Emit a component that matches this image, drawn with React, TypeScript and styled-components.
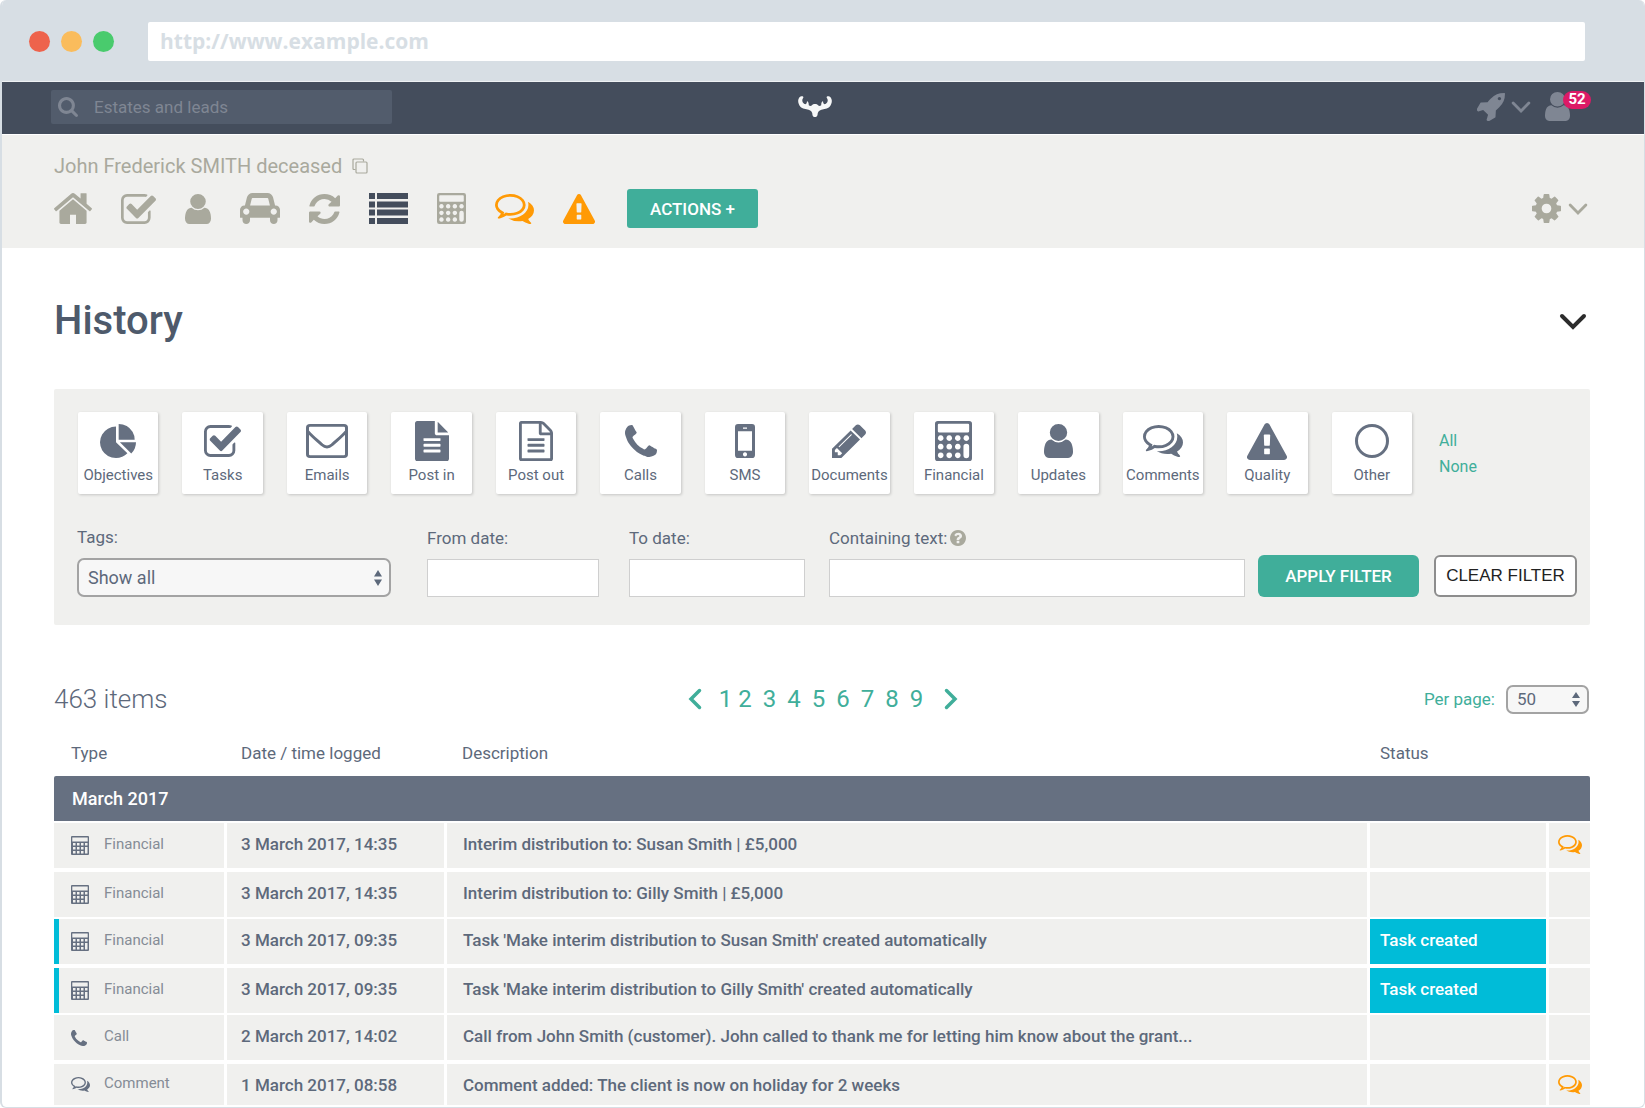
import React from "react";
import styled, { createGlobalStyle } from "styled-components";

const c = {
  frame: "#d7dee4",
  nav: "#444d5c",
  navField: "#525c6c",
  navMuted: "#7f8693",
  band: "#f0f0ee",
  stone: "#a9a99d",
  ink: "#5d697b",
  heading: "#4e5a6b",
  slate: "#667081",
  green: "#40ae9a",
  orange: "#ff9a05",
  cyan: "#00bcd8",
};

const GlobalStyle = createGlobalStyle`
  *, *::before, *::after { box-sizing: border-box; }
  body {
    margin: 0;
    background: #fff;
    color: ${c.ink};
    font-family: Roboto, "Liberation Sans", sans-serif;
    font-size: 17px;
    line-height: 24px;
  }
  button, input, select { font: inherit; color: inherit; margin: 0; }
  button { cursor: pointer; }
  svg { display: block; flex: none; }
`;

/* ---------- icons ---------- */

type Shape = { box?: string; body: React.ReactNode };

const Calculator = (
  <path
    fillRule="evenodd"
    d="M128 0H1536Q1664 0 1664 128V1664Q1664 1792 1536 1792H128Q0 1792 0 1664V128Q0 0 128 0ZM176 128Q128 128 128 176V464Q128 512 176 512H1488Q1536 512 1536 464V176Q1536 128 1488 128ZM256 640a128 128 0 1 0 1 0ZM640 640a128 128 0 1 0 1 0ZM1024 640a128 128 0 1 0 1 0ZM1408 640a128 128 0 1 0 1 0ZM256 1024a128 128 0 1 0 1 0ZM640 1024a128 128 0 1 0 1 0ZM1024 1024a128 128 0 1 0 1 0ZM256 1408a128 128 0 1 0 1 0ZM640 1408a128 128 0 1 0 1 0ZM1024 1408a128 128 0 1 0 1 0ZM1408 1024a128 128 0 0 1 128 128V1536a128 128 0 0 1-256 0V1152a128 128 0 0 1 128-128Z"
  />
);

const shapes: Record<string, Shape> = {
  home: {
    box: "90 250 1612 1286",
    body: <path d="M1472 992v480q0 26-19 45t-45 19h-384v-384h-256v384h-384q-26 0-45-19t-19-45v-480q0-1 .5-3t.5-3l575-474 575 474q1 2 1 6zm223-69l-62 74q-8 9-21 11h-3q-13 0-21-7l-692-577-692 577q-12 8-24 7-13-2-21-11l-62-74q-8-10-7-23.5t11-21.5l719-599q32-26 76-26t76 26l244 204v-195q0-14 9-23t23-9h192q14 0 23 9t9 23v408l219 182q10 8 11 21.5t-7 23.5z" />,
  },
  check: {
    box: "64 128 1664 1408",
    body: <path d="M1472 930v318q0 119-84.5 203.5t-203.5 84.5h-832q-119 0-203.5-84.5t-84.5-203.5v-832q0-119 84.5-203.5t203.5-84.5h832q63 0 117 25 15 7 18 23 3 17-9 29l-49 49q-10 10-23 10-3 0-9-2-23-6-45-6h-832q-66 0-113 47t-47 113v832q0 66 47 113t113 47h832q66 0 113-47t47-113v-254q0-13 9-22l64-64q10-10 23-10 6 0 12 3 20 8 20 29zm231-489l-814 814q-24 24-57 24t-57-24l-430-430q-24-24-24-57t24-57l110-110q24-24 57-24t57 24l263 263 647-647q24-24 57-24t57 24l110 110q24 24 24 57t-24 57z" />,
  },
  user: {
    box: "256 128 1280 1536",
    body: <path d="M1536 1399q0 109-62.5 187t-150.5 78h-854q-88 0-150.5-78t-62.5-187q0-85 8.5-160.5t31.5-152 58.5-131 94-89 134.5-34.5q131 128 313 128t313-128q76 0 134.5 34.5t94 89 58.5 131 31.5 152 8.5 160.5zm-256-887q0 159-112.5 271.5t-271.5 112.5-271.5-112.5-112.5-271.5 112.5-271.5 271.5-112.5 271.5 112.5 112.5 271.5z" />,
  },
  car: {
    box: "0 128 2048 1600",
    body: <path d="M480 1088q0-66-47-113t-113-47-113 47-47 113 47 113 113 47 113-47 47-113zm36-320h1016l-89-357q-2-8-14-17.5t-21-9.5h-768q-9 0-21 9.5t-14 17.5zm1372 320q0-66-47-113t-113-47-113 47-47 113 47 113 113 47 113-47 47-113zm160-96v384q0 14-9 23t-23 9h-96v128q0 80-56 136t-136 56-136-56-56-136v-128h-1024v128q0 80-56 136t-136 56-136-56-56-136v-128h-96q-14 0-23-9t-9-23v-384q0-93 65.5-158.5t158.5-65.5h28l105-419q23-94 104-157.5t179-63.5h768q98 0 179 63.5t104 157.5l105 419h28q93 0 158.5 65.5t65.5 158.5z" />,
  },
  refresh: {
    box: "128 128 1536 1536",
    body: <path d="M1639 1056q0 5-1 7-64 268-268 434.5t-478 166.5q-146 0-282.5-55t-243.5-157l-129 129q-19 19-45 19t-45-19-19-45v-448q0-26 19-45t45-19h448q26 0 45 19t19 45-19 45l-137 137q71 66 161 102t187 36q134 0 250-65t186-179q11-17 53-117 8-23 30-23h192q13 0 22.5 9.5t9.5 22.5zm25-800v448q0 26-19 45t-45 19h-448q-26 0-45-19t-19-45 19-45l138-138q-148-137-349-137-134 0-250 65t-186 179q-11 17-53 117-8 23-30 23h-199q-13 0-22.5-9.5t-9.5-22.5v-7q65-268 270-434.5t480-166.5q146 0 284 55.5t245 156.5l130-129q19-19 45-19t45 19 19 45z" />,
  },
  list: {
    box: "0 0 39 31",
    body: <path d="M0 0h6v6H0zM8 0h31v6H8zM0 8.500h6v6H0zM8 8.500h31v6H8zM0 16.500h6v6H0zM8 16.500h31v6H8zM0 25h6v6H0zM8 25h31v6H8z" />,
  },
  calculator: { box: "0 0 1664 1792", body: Calculator },
  calculatorSmall: {
    box: "0 0 18 19",
    body: (
      <path
        fillRule="evenodd"
        d="M1 0H17Q18 0 18 1V18Q18 19 17 19H1Q0 19 0 18V1Q0 0 1 0ZM1.300 1.500V5.500H16.700V1.500ZM2 7V9.500H4.500V7ZM6 7V9.500H8.500V7ZM10 7V9.500H12.500V7ZM14 7V9.500H16.500V7ZM2 11V13.500H4.500V11ZM6 11V13.500H8.500V11ZM10 11V13.500H12.500V11ZM14 11V17.500H16.500V11ZM2 15V17.500H4.500V15ZM6 15V17.500H8.500V15ZM10 15V17.500H12.500V15Z"
      />
    ),
  },
  comments: {
    box: "0 256 1792 1408",
    body: <path d="M704 384q-153 0-286 52t-211.5 141-78.500 191q0 82 53 158t149 132l97 56-35 84q34-20 62-39l44-31 53 10q78 14 153 14 153 0 286-52t211.500-141 78.500-191-78.500-191-211.500-141-286-52zm0-128q191 0 353.500 68.500t256.500 186.500 94 257-94 257-256.500 186.500-353.500 68.500q-86 0-176-16-124 88-278 128-36 9-86 16h-3q-11 0-20.500-8t-11.500-21q-1-3-1-6.500t.5-6.500 2-6l2.500-5 3.500-5.500 4-5 4.500-5 4-4.500q5-6 23-25t26-29.500 22.500-29 25-38.500 20.500-44q-124-72-195-177t-71-224q0-139 94-257t256.500-186.500 353.500-68.500zm822 1169q10 24 20.500 44t25 38.500 22.500 29 26 29.500 23 25q1 1 4 4.500t4.500 5 4 5 3.500 5.500l2.500 5 2 6 .5 6.500-1 6.500q-3 14-13 22t-22 7q-50-7-86-16-154-40-278-128-90 16-176 16-271 0-472-132 58 4 88 4 161 0 309-45t264-129q125-92 192-212t67-254q0-77-23-152 129 71 204 178t75 230q0 120-71 224.500t-195 176.500z" />,
  },
  warning: {
    box: "0 0 1792 1664",
    body: <path d="M1024 1375v-190q0-14-9.500-23.500t-22.500-9.500h-192q-13 0-22.500 9.500t-9.500 23.500v190q0 14 9.500 23.500t22.500 9.500h192q13 0 22.500-9.500t9.500-23.500zm-2-374l18-459q0-12-10-19-13-11-24-11h-220q-11 0-24 11-10 7-10 21l17 457q0 10 10 16.500t24 6.500h185q14 0 23.500-6.500t10.500-16.500zm-14-934l768 1408q35 63-2 126-17 29-46.500 46t-63.500 17h-1536q-34 0-63.500-17t-46.500-46q-37-63-2-126l768-1408q17-31 47-49t65-18 65 18 47 49z" />,
  },
  cog: {
    box: "128 128 1536 1536",
    body: <path d="M1152 896q0-106-75-181t-181-75-181 75-75 181 75 181 181 75 181-75 75-181zm512-109v222q0 12-8 23t-20 13l-185 28q-19 54-39 91 35 50 107 138 10 12 10 25t-9 23q-27 37-99 108t-94 71q-12 0-26-9l-138-108q-44 23-91 38-16 136-29 186-7 28-36 28h-222q-14 0-24.500-8.500t-11.500-21.500l-28-184q-49-16-90-37l-141 107q-10 9-25 9-14 0-25-11-126-114-165-168-7-10-7-23 0-12 8-23 15-21 51-66.500t54-70.500q-27-50-41-99l-183-27q-13-2-21-12.500t-8-23.500v-222q0-12 8-23t19-13l186-28q14-46 39-92-40-57-107-138-10-12-10-24 0-10 9-23 26-36 98.500-107.500t94.500-71.500q13 0 26 10l138 107q44-23 91-38 16-136 29-186 7-28 36-28h222q14 0 24.500 8.500t11.500 21.500l28 184q49 16 90 37l142-107q9-9 24-9 13 0 25 10 129 119 165 170 7 8 7 22 0 12-8 23-15 21-51 66.500t-54 70.500q26 50 41 98l183 28q13 2 21 12.500t8 23.500z" />,
  },
  rocket: {
    box: "60 128 1604 1604",
    body: <path d="M1440 448q0-40-28-68t-68-28-68 28-28 68 28 68 68 28 68-28 28-68zm224-288q0 249-75.500 430.500t-253.500 360.500q-81 80-195 176l-20 379q-2 16-16 26l-384 224q-7 4-16 4-12 0-23-9l-64-64q-13-14-8-32l85-276-281-281-276 85q-3 1-9 1-14 0-23-9l-64-64q-17-19-5-39l224-384q10-14 26-16l379-20q96-114 176-195 188-187 358-258t431-71q14 0 24 9.500t10 22.500z" />,
  },
  search: {
    box: "64 128 1664 1664",
    body: <path d="M1216 832q0-185-131.500-316.500t-316.500-131.500-316.500 131.500-131.500 316.500 131.500 316.500 316.500 131.500 316.500-131.500 131.500-316.500zm512 832q0 52-38 90t-90 38q-54 0-90-38l-343-342q-179 124-399 124-143 0-273.500-55.500t-225-150-150-225-55.500-273.500 55.500-273.500 150-225 225-150 273.500-55.500 273.500 55.500 225 150 150 225 55.500 273.500q0 220-124 399l343 343q37 37 37 90z" />,
  },
  phone: {
    box: "192 128 1408 1408",
    body: <path d="M1600 1240q0 27-10 70.500t-21 68.500q-21 50-122 106-94 51-186 51-27 0-53-3.500t-57.500-12.500-47-14.500-55.500-20.500-49-18q-98-35-175-83-127-79-264-216t-216-264q-48-77-83-175-3-9-18-49t-20.500-55.500-14.500-47-12.500-57.500-3.500-53q0-92 51-186 56-101 106-122 25-11 68.500-21t70.500-10q14 0 21 3 18 6 53 76 11 19 30 54t35 63.500 31 53.500q3 4 17.500 25t21.500 35.500 7 28.500q0 20-28.500 50t-62 55-62 53-28.500 46q0 9 5 22.500t8.500 20.500 14 24 11.500 19q76 137 174 235t235 174q2 1 19 11.500t24 14 20.500 8.500 22.500 5q18 0 46-28.500t53-62 55-62 50-28.500q14 0 28.500 7t35.500 21.500 25 17.500q25 15 53.500 31t63.500 35 54 30q70 35 76 53 3 7 3 21z" />,
  },
  pie: {
    box: "0 0 1728 1664",
    body: <path d="M768 890l546 546q-106 108-247.500 168t-298.500 60q-209 0-385.500-103t-279.500-279.500-103-385.500 103-385.500 279.500-279.500 385.500-103v762zm187 6h773q0 157-60 298.500t-168 247.500zm709-128h-768v-768q209 0 385.500 103t279.500 279.500 103 385.500z" />,
  },
  envelope: {
    box: "0 0 42 36",
    body: (
      <g fill="none" stroke="currentColor" strokeWidth="3" strokeLinejoin="round">
        <rect x="1.500" y="1.500" width="39" height="33" rx="2.500" />
        <path d="M2 8C7 14 12 18 16 22Q21 26.500 26 22C30 18 35 14 40 8" />
      </g>
    ),
  },
  file: {
    box: "128 0 1536 1792",
    body: <path d="M1596 476q14 14 28 36h-472v-472q22 14 36 28zm-476 164h544v1056q0 40-28 68t-68 28h-1344q-40 0-68-28t-28-68v-1600q0-40 28-68t68-28h800v544q0 40 28 68t68 28zm160 736v-64q0-14-9-23t-23-9h-704q-14 0-23 9t-9 23v64q0 14 9 23t23 9h704q14 0 23-9t9-23zm0-256v-64q0-14-9-23t-23-9h-704q-14 0-23 9t-9 23v64q0 14 9 23t23 9h704q14 0 23-9t9-23zm0-256v-64q0-14-9-23t-23-9h-704q-14 0-23 9t-9 23v64q0 14 9 23t23 9h704q14 0 23-9t9-23z" />,
  },
  fileOutline: {
    box: "128 0 1536 1792",
    body: <path d="M1596 380q28 28 48 76t20 88v1152q0 40-28 68t-68 28h-1344q-40 0-68-28t-28-68v-1600q0-40 28-68t68-28h896q40 0 88 20t76 48zm-444-244v376h376q-10-29-22-41l-313-313q-12-12-41-22zm384 1528v-1024h-416q-40 0-68-28t-28-68v-416h-768v1536h1280zm-1024-864q0-14 9-23t23-9h704q14 0 23 9t9 23v64q0 14-9 23t-23 9h-704q-14 0-23-9t-9-23v-64zm736 224q14 0 23 9t9 23v64q0 14-9 23t-23 9h-704q-14 0-23-9t-9-23v-64q0-14 9-23t23-9h704zm0 256q14 0 23 9t9 23v64q0 14-9 23t-23 9h-704q-14 0-23-9t-9-23v-64q0-14 9-23t23-9h704z" />,
  },
  pencil: {
    box: "128 128 1515 1536",
    body: <path d="M491 1536l91-91-235-235-91 91v107h128v128h107zm523-928q0-22-22-22-10 0-17 7l-542 542q-7 7-7 17 0 22 22 22 10 0 17-7l542-542q7-7 7-17zm-54-192l416 416-832 832h-416v-416zm683 96q0 53-37 90l-166 166-416-416 166-165q36-38 90-38 53 0 91 38l235 234q37 39 37 91z" />,
  },
  mobile: {
    box: "0 0 20 33",
    body: (
      <path
        fillRule="evenodd"
        d="M3 0H17Q20 0 20 3V30Q20 33 17 33H3Q0 33 0 30V3Q0 0 3 0ZM3 7V26H17V7ZM8 3.500V4.500H12V3.500ZM10 27.500a2 2 0 1 0 .01 0Z"
      />
    ),
  },
  circle: {
    box: "0 0 34 34",
    body: <circle cx="17" cy="17" r="15.500" fill="none" stroke="currentColor" strokeWidth="3" />,
  },
  clone: {
    box: "0 0 16 16",
    body: (
      <g fill="none" stroke="currentColor" strokeWidth="1.200">
        <rect x="4" y="4" width="11" height="11" rx="1" />
        <path d="M3.500 11.500H2Q1 11.500 1 10.500V2Q1 1 2 1H10.500Q11.500 1 11.500 2V3.500" />
      </g>
    ),
  },
  help: {
    box: "0 0 1536 1536",
    body: <path d="M896 1248v-192q0-14-9-23t-23-9h-192q-14 0-23 9t-9 23v192q0 14 9 23t23 9h192q14 0 23-9t9-23zm256-672q0-88-55.500-163t-138.500-116-170-41q-243 0-371 213-15 24 8 42l132 100q7 6 19 6 16 0 25-12 53-68 86-92 34-24 86-24 48 0 85.500 26t37.500 59q0 38-20 61t-68 45q-63 28-115.500 86.500t-52.500 125.500v36q0 14 9 23t23 9h192q14 0 23-9t9-23q0-19 21.500-49.500t54.500-49.500q32-18 49-28.500t46-35 44.500-48 28-60.500 12.500-81zm384 192q0 209-103 385.500t-279.500 279.500-385.500 103-385.500-103-279.500-279.500-103-385.500 103-385.500 279.500-279.500 385.500-103 385.500 103 279.500 279.500 103 385.500z" />,
  },
  down: {
    box: "0 0 28 17",
    body: <path d="M3 3L14 14L25 3" fill="none" stroke="currentColor" strokeWidth="4" strokeLinecap="round" />,
  },
  left: {
    box: "0 0 14 22",
    body: <path d="M11.500 2.500L3 11L11.500 19.500" fill="none" stroke="currentColor" strokeWidth="3.500" strokeLinecap="round" />,
  },
  right: {
    box: "0 0 14 22",
    body: <path d="M2.500 2.500L11 11L2.500 19.500" fill="none" stroke="currentColor" strokeWidth="3.500" strokeLinecap="round" />,
  },
  updown: {
    box: "0 0 8 16",
    body: <path d="M4 0L8 6.500H0ZM4 16L8 9.500H0Z" />,
  },
  antlers: {
    box: "0 0 34 21",
    body: (
      <path d="M2.500 .5C5 -.5 6 1 5 2.300C3.500 4.500 4.500 7 6.500 8C8 8.500 8.800 7.500 9 5.200C10 5.200 10.800 6.800 10.800 9.200C12 10.200 13 10 14 9.300C14.800 7.600 19.200 7.600 20 9.300C21 10 22 10.200 23.200 9.200C23.200 6.800 24 5.200 25 5.200C25.200 7.500 26 8.500 27.500 8C29.500 7 30.500 4.500 29 2.300C28 1 29 -.5 31.500 .5C34 2 34.500 5.500 33 8.500C31.500 12 28.500 13 25.500 13.200C22.500 13.600 20.500 14.600 19.800 17C19.500 19 19.500 21 17 21C14.500 21 14.500 19 14.200 17C13.500 14.600 11.500 13.600 8.500 13.200C5.500 13 2.500 12 1 8.500C-.5 5.500 0 2 2.500 .5Z" />
    ),
  },
};

function Icon({ name, w, h }: { name: string; w: number; h: number }) {
  const s = shapes[name];
  return (
    <svg width={w} height={h} viewBox={s.box} preserveAspectRatio="none" fill="currentColor" aria-hidden="true">
      {s.body}
    </svg>
  );
}

/* ---------- browser frame ---------- */

const Frame = styled.div`
  min-height: 100vh;
  display: flex;
  flex-direction: column;
  border: solid ${c.frame};
  border-width: 0 1px 1px 2px;
  border-radius: 6px;
  overflow: hidden;
`;

const Chrome = styled.div`
  display: flex;
  align-items: center;
  height: 82px;
  padding: 2px 59px 0 27px;
  background: ${c.frame};
  border-bottom: 1px solid #eef1f3;
`;

const Dots = styled.div`
  display: flex;
  gap: 11px;
  width: 119px;
`;

const Dot = styled.span<{ $color: string }>`
  width: 21px;
  height: 21px;
  border-radius: 50%;
  background: ${(p) => p.$color};
`;

const Address = styled.input`
  flex: 1;
  min-width: 0;
  height: 39px;
  padding: 0 12px 2px;
  border: 0;
  border-radius: 2px;
  background: #fff;
  color: ${c.frame};
  font-family: "Open Sans", "Noto Sans", sans-serif;
  font-size: 21px;
  font-weight: 700;
`;

/* ---------- top navigation ---------- */

const Nav = styled.header`
  display: grid;
  grid-template-columns: 1fr auto 1fr;
  align-items: center;
  height: 52px;
  padding: 0 66px 3px 49px;
  background: ${c.nav};
  color: ${c.navMuted};
`;

const SearchBox = styled.label`
  display: flex;
  align-items: center;
  gap: 16px;
  width: 341px;
  height: 34px;
  padding: 0 7px;
  border-radius: 2px;
  background: ${c.navField};
`;

const SearchInput = styled.input`
  flex: 1;
  min-width: 0;
  padding: 0;
  border: 0;
  background: none;
  &::placeholder { color: ${c.navMuted}; opacity: 1; }
`;

const Logo = styled.a`
  color: #f6f7f7;
`;

const NavTools = styled.div`
  display: flex;
  justify-content: flex-end;
  align-items: center;
  gap: 14px;
  padding-right: 8px;
`;

const IconButton = styled.button<{ $gap?: number; $color?: string }>`
  display: flex;
  align-items: center;
  gap: ${(p) => p.$gap ?? 0}px;
  padding: 0;
  border: 0;
  background: none;
  color: ${(p) => p.$color ?? "inherit"};
`;

const UserButton = styled(IconButton)`
  position: relative;
`;

const Badge = styled.span`
  position: absolute;
  top: -1px;
  left: 18px;
  width: 28px;
  height: 18px;
  border-radius: 9px;
  background: #dc1a66;
  color: #fff;
  font-size: 15px;
  font-weight: 700;
  line-height: 17px;
  text-align: center;
`;

/* ---------- estate header ---------- */

const Band = styled.section`
  display: flex;
  flex-direction: column;
  gap: 11px;
  padding: 19px 54px 20px 52px;
  background: ${c.band};
  border-top: 1px solid #fff;
  color: ${c.stone};
`;

const EstateName = styled.div`
  display: flex;
  align-items: center;
  gap: 10px;
  font-size: 20px;
`;

const Toolbar = styled.div`
  display: flex;
  align-items: center;
  justify-content: space-between;
  padding-right: 2px;
`;

const Tools = styled.nav`
  display: flex;
  align-items: center;
  gap: 29px;
`;

const Tool = styled.a<{ $color?: string }>`
  color: ${(p) => p.$color ?? c.stone};
`;

const Primary = styled.button<{ $height: number; $radius: number }>`
  height: ${(p) => p.$height}px;
  padding: 0 23px;
  border: 0;
  border-radius: ${(p) => p.$radius}px;
  background: ${c.green};
  color: #fff;
  font-weight: 500;
  white-space: nowrap;
`;

const ToolbarAction = styled.div`
  padding-left: 3px;
`;

/* ---------- page body ---------- */

const Main = styled.main`
  flex: 1;
  padding: 49px 54px 0 52px;
`;

const TitleRow = styled.div`
  display: flex;
  align-items: center;
  justify-content: space-between;
  padding-right: 3px;
  color: #2c2c2c;
`;

const Title = styled.h1`
  margin: 0;
  color: ${c.heading};
  font-size: 40px;
  font-weight: 500;
  line-height: 48px;
`;

const Filters = styled.form`
  margin-top: 44px;
  padding: 23px 13px 28px 23px;
  border-radius: 2px;
  background: ${c.band};
`;

const Types = styled.div`
  display: flex;
  padding: 0 10px 0 1px;
`;

const Cards = styled.div`
  flex: 1;
  display: grid;
  grid-template-columns: repeat(13, 1fr);
  gap: 24px;
`;

const Card = styled.button`
  display: grid;
  grid-template-rows: 48px 20px;
  justify-items: center;
  align-items: center;
  align-content: start;
  height: 82px;
  min-width: 0;
  padding: 5px 0 0;
  border: 0;
  border-radius: 2px;
  background: #fff;
  box-shadow: 1px 1px 3px rgba(0, 0, 0, 0.18);
  color: ${c.slate};
  font-size: 15px;
  line-height: 20px;
  white-space: nowrap;
`;

const CardLabel = styled.span`
  color: ${c.ink};
`;

const Toggles = styled.div`
  display: flex;
  flex-direction: column;
  align-items: flex-start;
  width: 155px;
  padding: 16px 0 0 27px;
`;

const GreenLink = styled.a`
  color: ${c.green};
  font-size: 16px;
  line-height: 26px;
  text-decoration: none;
`;

const Fields = styled.div`
  display: flex;
  align-items: flex-end;
  margin-top: 28px;
`;

const Field = styled.div<{ $w?: number; $after: number }>`
  flex: ${(p) => (p.$w ? `0 0 ${p.$w}px` : "1 1 0")};
  min-width: 0;
  margin-right: ${(p) => p.$after}px;
`;

const FieldLabel = styled.label`
  display: flex;
  align-items: center;
  gap: 3px;
  height: 30px;
  margin-bottom: 6px;
  color: ${c.ink};
  white-space: nowrap;
`;

const Help = styled.span`
  color: ${c.stone};
`;

const TextInput = styled.input`
  display: block;
  width: 100%;
  height: 38px;
  padding: 0 10px;
  border: 1px solid #cfcfcf;
  background: #fff;
`;

const Picker = styled.span<{ $w?: number; $h: number; $size: number }>`
  position: relative;
  display: flex;
  align-items: center;
  width: ${(p) => (p.$w ? p.$w + "px" : "100%")};
  height: ${(p) => p.$h}px;
  border: 2px solid #a3a3a3;
  border-radius: 7px;
  background: #f7f7f7;
  color: ${c.ink};
  font-size: ${(p) => p.$size}px;
  svg { position: absolute; right: 7px; pointer-events: none; }
`;

const Select = styled.select`
  appearance: none;
  width: 100%;
  height: 100%;
  padding: 0 20px 0 9px;
  border: 0;
  background: none;
`;

const Apply = styled(Primary)`
  flex: 0 0 161px;
  margin-right: 15px;
`;

const Clear = styled.button`
  flex: 0 0 143px;
  height: 42px;
  padding: 0;
  border: 2px solid #8d8d8d;
  border-radius: 6px;
  background: #fff;
  color: #222;
  font-family: "Liberation Sans", Arial, sans-serif;
  white-space: nowrap;
`;

/* ---------- results ---------- */

const ResultsBar = styled.div`
  display: grid;
  grid-template-columns: 1fr auto 1fr;
  align-items: center;
  height: 36px;
  margin-top: 56px;
  padding-right: 1px;
`;

const Count = styled.h2`
  margin: 0;
  font-size: 26px;
  font-weight: 300;
  line-height: 34px;
`;

const Pages = styled.nav`
  display: flex;
  align-items: center;
  padding-left: 3px;
  color: ${c.green};
  font-size: 24px;
`;

const Page = styled.a<{ $current?: boolean }>`
  padding: ${(p) => (p.$current ? "0 0 0 3px" : "0 5px 0 6px")};
  color: inherit;
  text-decoration: none;
`;

const Arrow = styled.a<{ $next?: boolean }>`
  padding: ${(p) => (p.$next ? "0 0 0 16px" : "0 14px 0 0")};
  color: inherit;
`;

const PerPage = styled.label`
  display: flex;
  align-items: center;
  justify-content: flex-end;
  gap: 11px;
  color: ${c.green};
`;

const Table = styled.table`
  width: 100%;
  margin-top: 18px;
  border-collapse: separate;
  border-spacing: 0;
  table-layout: fixed;
`;

const HeadCell = styled.th<{ $w?: number; $indent: number }>`
  width: ${(p) => (p.$w ? p.$w + "px" : "auto")};
  height: 41px;
  padding: 0 0 5px ${(p) => p.$indent}px;
  font-weight: 400;
  text-align: left;
  vertical-align: middle;
`;

const MonthCell = styled.th`
  height: 47px;
  padding: 0 18px;
  border-bottom: 2px solid #fff;
  background: ${c.slate};
  background-clip: padding-box;
  border-radius: 2px;
  color: #fff;
  font-size: 18px;
  font-weight: 500;
  text-align: left;
`;

const Cell = styled.td<{ $indent?: number; $task?: boolean }>`
  height: 47px;
  padding: 0 0 3px ${(p) => p.$indent ?? 0}px;
  border-right: 3px solid #fff;
  border-bottom: 2px solid #fff;
  background: ${(p) => (p.$task ? c.cyan : c.band)};
  background-clip: padding-box;
  color: ${(p) => (p.$task ? "#fff" : c.ink)};
  font-weight: 500;
  white-space: nowrap;
  overflow: hidden;
  text-overflow: ellipsis;
  &:last-child { border-right: 0; }
`;

const Row = styled.tr`
  &:nth-child(odd) > ${Cell} { height: 49px; border-bottom-width: 4px; }
  &:last-child > ${Cell} { height: 41px; padding-bottom: 0; border-bottom: 0; }
`;

const TypeTag = styled.span<{ $task?: boolean }>`
  display: grid;
  grid-template-columns: 18px 1fr;
  align-items: center;
  gap: 15px;
  height: 45px;
  padding-left: ${(p) => (p.$task ? 12 : 17)}px;
  border-left: ${(p) => (p.$task ? "5px solid " + c.cyan : "0")};
  color: ${c.slate};
`;

const TypeCell = styled(Cell)`
  padding: 0;
  ${Row}:last-child & ${TypeTag} { height: 41px; }
`;

const TypeText = styled.span`
  padding-bottom: 3px;
  color: #858c96;
  font-size: 15px;
  font-weight: 400;
`;

const Note = styled.a`
  display: flex;
  justify-content: center;
  color: ${c.orange};
`;

/* ---------- data ---------- */

const tools: { label: string; icon: string; w: number; h: number; color?: string }[] = [
  { label: "Home", icon: "home", w: 38, h: 31 },
  { label: "Tasks", icon: "check", w: 35, h: 30 },
  { label: "Contacts", icon: "user", w: 26, h: 30 },
  { label: "Vehicles", icon: "car", w: 40, h: 31 },
  { label: "Refresh", icon: "refresh", w: 31, h: 30 },
  { label: "History", icon: "list", w: 39, h: 31, color: c.nav },
  { label: "Accounts", icon: "calculator", w: 29, h: 31 },
  { label: "Comments", icon: "comments", w: 39, h: 30, color: c.orange },
  { label: "Alerts", icon: "warning", w: 32, h: 30, color: c.orange },
];

const types: [string, string, number, number][] = [
  ["Objectives", "pie", 36, 34],
  ["Tasks", "check", 37, 32],
  ["Emails", "envelope", 42, 34],
  ["Post in", "file", 34, 40],
  ["Post out", "fileOutline", 34, 40],
  ["Calls", "phone", 32, 32],
  ["SMS", "mobile", 20, 34],
  ["Documents", "pencil", 34, 34],
  ["Financial", "calculator", 37, 40],
  ["Updates", "user", 29, 34],
  ["Comments", "comments", 40, 32],
  ["Quality", "warning", 40, 37],
  ["Other", "circle", 34, 34],
];

type Entry = { icon: string; type: string; date: string; text: string; task?: boolean; note?: boolean };

const entries: Entry[] = [
  { icon: "calculatorSmall", type: "Financial", date: "3 March 2017, 14:35", text: "Interim distribution to: Susan Smith | £5,000", note: true },
  { icon: "calculatorSmall", type: "Financial", date: "3 March 2017, 14:35", text: "Interim distribution to: Gilly Smith | £5,000" },
  { icon: "calculatorSmall", type: "Financial", date: "3 March 2017, 09:35", text: "Task 'Make interim distribution to Susan Smith' created automatically", task: true },
  { icon: "calculatorSmall", type: "Financial", date: "3 March 2017, 09:35", text: "Task 'Make interim distribution to Gilly Smith' created automatically", task: true },
  { icon: "phone", type: "Call", date: "2 March 2017, 14:02", text: "Call from John Smith (customer). John called to thank me for letting him know about the grant..." },
  { icon: "comments", type: "Comment", date: "1 March 2017, 08:58", text: "Comment added: The client is now on holiday for 2 weeks", note: true },
];

const glyphSize: Record<string, [number, number]> = {
  calculatorSmall: [18, 19],
  phone: [16, 16],
  comments: [19, 15],
};

export default function App() {
  return (
    <>
      <GlobalStyle />
      <Frame>
        <Chrome>
          <Dots>
            <Dot $color="#ee634c" />
            <Dot $color="#fabc5c" />
            <Dot $color="#49cb6d" />
          </Dots>
          <Address aria-label="Address" defaultValue="http://www.example.com" />
        </Chrome>

        <Nav>
          <SearchBox>
            <Icon name="search" w={20} h={20} />
            <SearchInput aria-label="Search" placeholder="Estates and leads" />
          </SearchBox>
          <Logo href="#" aria-label="Dashboard">
            <Icon name="antlers" w={34} h={21} />
          </Logo>
          <NavTools>
            <IconButton type="button" aria-label="Quick launch" $gap={6}>
              <Icon name="rocket" w={28} h={28} />
              <Icon name="down" w={20} h={12} />
            </IconButton>
            <UserButton type="button" aria-label="Account">
              <Icon name="user" w={25} h={29} />
              <Badge>52</Badge>
            </UserButton>
          </NavTools>
        </Nav>

        <Band>
          <EstateName>
            John Frederick SMITH deceased
            <IconButton type="button" aria-label="Copy name">
              <Icon name="clone" w={16} h={16} />
            </IconButton>
          </EstateName>
          <Toolbar>
            <Tools>
              {tools.map((t) => (
                <Tool key={t.label} href="#" aria-label={t.label} $color={t.color}>
                  <Icon name={t.icon} w={t.w} h={t.h} />
                </Tool>
              ))}
              <ToolbarAction>
                <Primary type="button" $height={39} $radius={3}>ACTIONS +</Primary>
              </ToolbarAction>
            </Tools>
            <IconButton type="button" aria-label="Settings" $gap={7}>
              <Icon name="cog" w={29} h={29} />
              <Icon name="down" w={20} h={12} />
            </IconButton>
          </Toolbar>
        </Band>

        <Main>
          <TitleRow>
            <Title>History</Title>
            <IconButton type="button" aria-label="Collapse">
              <Icon name="down" w={28} h={17} />
            </IconButton>
          </TitleRow>

          <Filters onSubmit={(e) => e.preventDefault()}>
            <Types>
              <Cards>
                {types.map(([label, icon, w, h]) => (
                  <Card key={label} type="button">
                    <Icon name={icon} w={w} h={h} />
                    <CardLabel>{label}</CardLabel>
                  </Card>
                ))}
              </Cards>
              <Toggles>
                <GreenLink href="#">All</GreenLink>
                <GreenLink href="#">None</GreenLink>
              </Toggles>
            </Types>
            <Fields>
              <Field $w={314} $after={36}>
                <FieldLabel htmlFor="tags">Tags:</FieldLabel>
                <Picker $h={39} $size={18}>
                  <Select id="tags"><option>Show all</option></Select>
                  <Icon name="updown" w={8} h={16} />
                </Picker>
              </Field>
              <Field $w={172} $after={30}>
                <FieldLabel htmlFor="from">From date:</FieldLabel>
                <TextInput id="from" />
              </Field>
              <Field $w={176} $after={24}>
                <FieldLabel htmlFor="to">To date:</FieldLabel>
                <TextInput id="to" />
              </Field>
              <Field $after={13}>
                <FieldLabel htmlFor="text">
                  Containing text:
                  <Help><Icon name="help" w={16} h={16} /></Help>
                </FieldLabel>
                <TextInput id="text" />
              </Field>
              <Apply type="submit" $height={42} $radius={6}>APPLY FILTER</Apply>
              <Clear type="reset">CLEAR FILTER</Clear>
            </Fields>
          </Filters>

          <ResultsBar>
            <Count>463 items</Count>
            <Pages aria-label="Pages">
              <Arrow href="#" aria-label="Previous"><Icon name="left" w={14} h={22} /></Arrow>
              {[1, 2, 3, 4, 5, 6, 7, 8, 9].map((n) => (
                <Page key={n} href="#" $current={n === 1}>{n}</Page>
              ))}
              <Arrow href="#" aria-label="Next" $next><Icon name="right" w={14} h={22} /></Arrow>
            </Pages>
            <PerPage>
              Per page:
              <Picker $w={83} $h={29} $size={17}>
                <Select><option>50</option></Select>
                <Icon name="updown" w={8} h={15} />
              </Picker>
            </PerPage>
          </ResultsBar>

          <Table>
            <thead>
              <tr>
                <HeadCell $w={173} $indent={17}>Type</HeadCell>
                <HeadCell $w={220} $indent={14}>Date / time logged</HeadCell>
                <HeadCell $indent={15}>Description</HeadCell>
                <HeadCell $w={179} $indent={10}>Status</HeadCell>
                <HeadCell $w={41} $indent={0} aria-label="Comments" />
              </tr>
              <tr>
                <MonthCell colSpan={5}>March 2017</MonthCell>
              </tr>
            </thead>
            <tbody>
              {entries.map((e, i) => (
                <Row key={i}>
                  <TypeCell>
                    <TypeTag $task={e.task}>
                      <Icon name={e.icon} w={glyphSize[e.icon][0]} h={glyphSize[e.icon][1]} />
                      <TypeText>{e.type}</TypeText>
                    </TypeTag>
                  </TypeCell>
                  <Cell $indent={14}>{e.date}</Cell>
                  <Cell $indent={16}>{e.text}</Cell>
                  <Cell $indent={10} $task={e.task}>{e.task ? "Task created" : ""}</Cell>
                  <Cell>
                    {e.note && (
                      <Note href="#" aria-label="Comments">
                        <Icon name="comments" w={24} h={19} />
                      </Note>
                    )}
                  </Cell>
                </Row>
              ))}
            </tbody>
          </Table>
        </Main>
      </Frame>
    </>
  );
}
